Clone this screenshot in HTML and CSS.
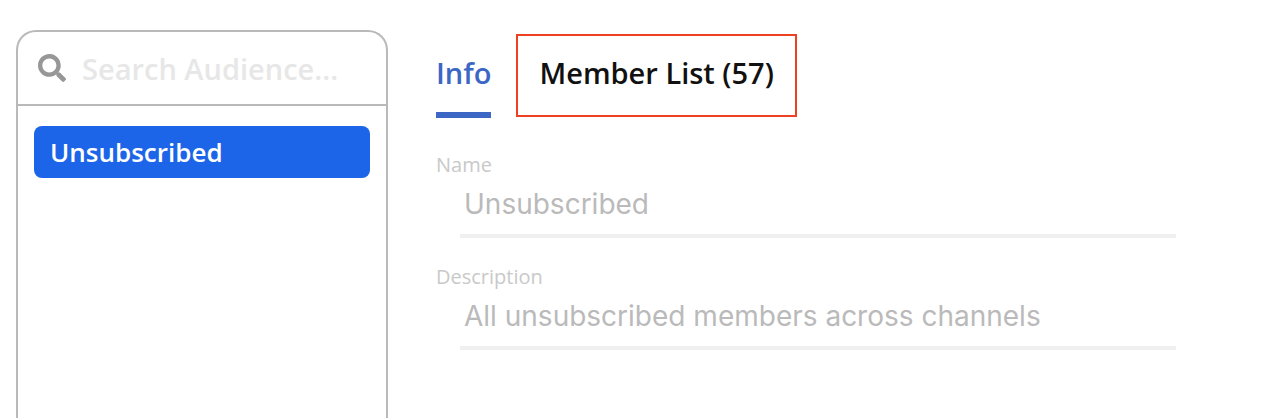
FILE: index.html
```html
<!DOCTYPE html>
<html lang="en">
<head>
  <meta charset="UTF-8">
  <meta name="viewport" content="width=device-width, initial-scale=1">
  <title>Audiences</title>
  <link rel="stylesheet" href="styles.css">
</head>
<body>
  <div class="page">
    <aside class="sidebar">
      <label class="search">
        <svg class="search-icon" viewBox="0 0 512 512" aria-hidden="true">
          <path d="M505 442.7L405.3 343c-4.5-4.5-10.6-7-17-7H372c27.6-35.3 44-79.7 44-128C416 93.1 322.9 0 208 0S0 93.1 0 208s93.1 208 208 208c48.3 0 92.7-16.4 128-44v16.3c0 6.4 2.5 12.5 7 17l99.7 99.7c9.4 9.4 24.6 9.4 33.9 0l28.3-28.3c9.4-9.4 9.4-24.6.1-34zM208 336c-70.7 0-128-57.2-128-128 0-70.7 57.2-128 128-128 70.7 0 128 57.2 128 128 0 70.7-57.2 128-128 128z"/>
        </svg>
        <input class="search-input" type="text" placeholder="Search Audience..." aria-label="Search Audience">
      </label>
      <div class="audience-list">
        <button class="audience selected" type="button">Unsubscribed</button>
      </div>
    </aside>

    <main class="details">
      <nav class="tabs">
        <button class="tab active" type="button">Info</button>
        <button class="tab highlighted" type="button">Member List (57)</button>
      </nav>

      <form class="fields">
        <div class="field">
          <label for="name">Name</label>
          <input id="name" type="text" value="Unsubscribed" disabled>
        </div>
        <div class="field">
          <label for="description">Description</label>
          <input id="description" type="text" value="All unsubscribed members across channels" disabled>
        </div>
      </form>
    </main>
  </div>
</body>
</html>
```
FILE: styles.css
```css
* {
  box-sizing: border-box;
}

body {
  margin: 0;
  background: #fff;
  font-family: "Open Sans", sans-serif;
}

button,
input {
  margin: 0;
  border: none;
  border-radius: 0;
  background: none;
  font-family: inherit;
}

button {
  cursor: pointer;
}

.page {
  display: grid;
  grid-template-columns: 372px 1fr;
  gap: 48px;
  min-height: 100vh;
  padding: 30px 98px 0 16px;
}

/* Audience sidebar */
.sidebar {
  border: 2px solid #b9b9b9;
  border-bottom: none;
  border-radius: 20px 20px 0 0;
}

.search {
  display: flex;
  align-items: center;
  gap: 16px;
  padding: 16px 20px;
  border-bottom: 2px solid #b9b9b9;
}

.search-icon {
  flex: none;
  width: 28px;
  height: 28px;
  fill: #979797;
}

.search-input {
  flex: 1;
  min-width: 0;
  height: 40px;
  padding: 0;
  font-size: 29px;
  font-weight: 600;
  outline: none;
}

.search-input::placeholder {
  color: #e7e7e7;
  opacity: 1;
}

.audience-list {
  padding: 20px 16px;
}

.audience {
  display: block;
  width: 100%;
  padding: 8px 16px;
  border-radius: 8px;
  font-size: 26px;
  font-weight: 600;
  line-height: 36px;
  text-align: left;
}

.audience.selected {
  background: #1d65e8;
  color: #fff;
}

/* Tabs */
.details {
  padding-top: 4px;
}

.tabs {
  display: flex;
  align-items: flex-start;
  gap: 25px;
}

.tab {
  padding: 20px 0;
  color: #111;
  font-size: 29px;
  font-weight: 600;
  line-height: 38px;
}

.tab.active {
  border-bottom: 6px solid #3c67c4;
  color: #3c67c4;
}

.tab.highlighted {
  padding: 18px 21px 23px;
  border: 2px solid #ee4023;
}

/* Info form */
.fields {
  display: grid;
  gap: 24px;
  margin-top: 32px;
}

.field label {
  display: block;
  color: #c9c9c9;
  font-size: 20px;
  line-height: 30px;
}

.field input {
  display: block;
  width: calc(100% - 24px);
  height: 58px;
  margin-left: 24px;
  padding: 0 4px 6px;
  border-bottom: 4px solid #f0f0f0;
  color: #bababa;
  font-family: Inter, sans-serif;
  font-size: 28px;
}
```
